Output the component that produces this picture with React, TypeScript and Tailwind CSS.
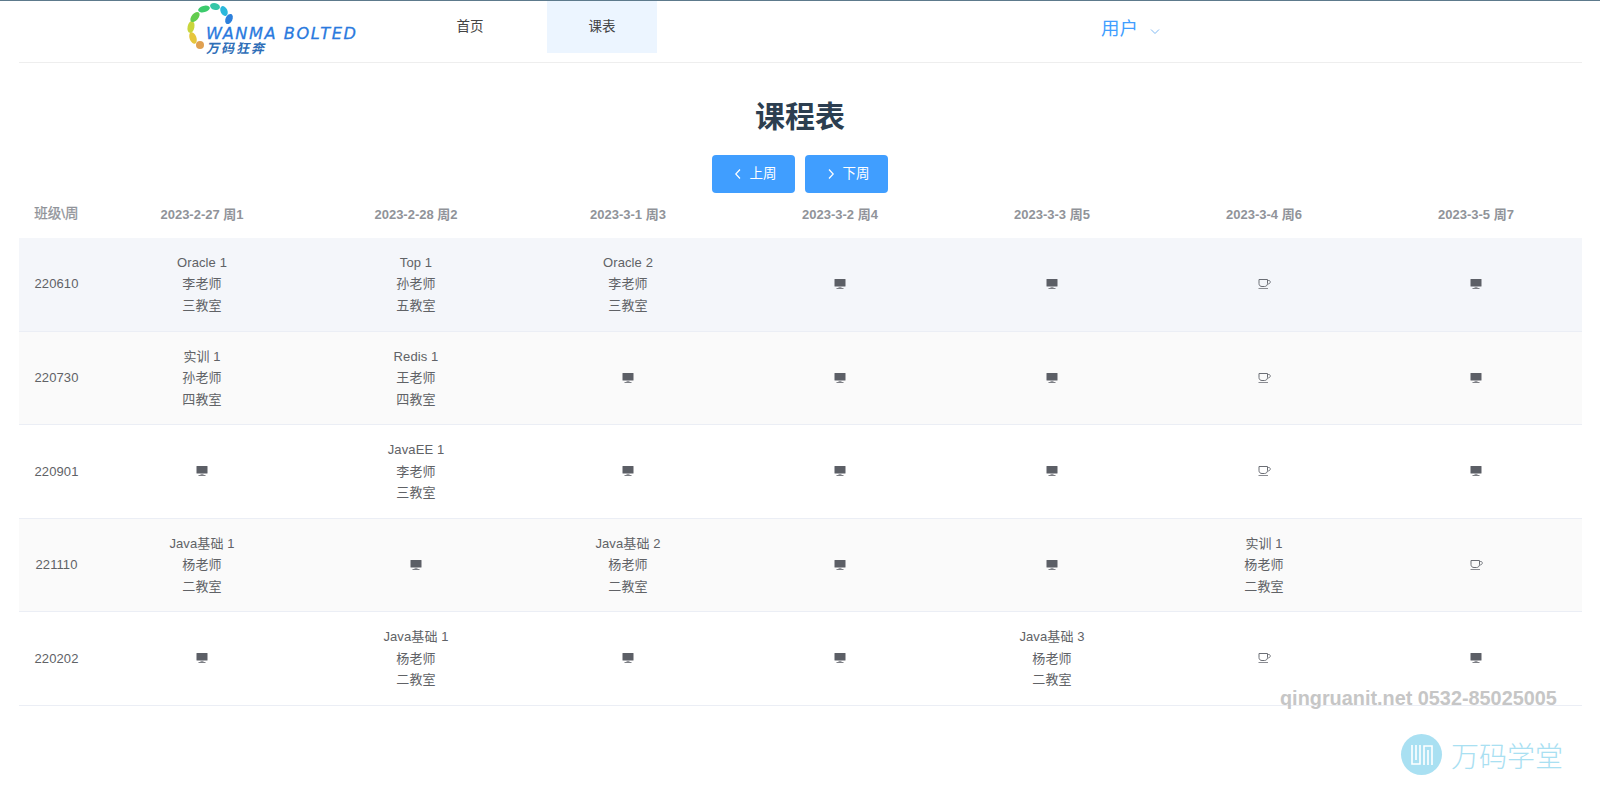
const FONT = "font-['Liberation_Sans','Noto_Sans_CJK_SC',sans-serif]";

type Cell = string[] | "m" | "c";

const days = ["2023-2-27 周1", "2023-2-28 周2", "2023-3-1 周3", "2023-3-2 周4", "2023-3-3 周5", "2023-3-4 周6", "2023-3-5 周7"];

const rows: { id: string; bg: string; cells: Cell[] }[] = [
  {
    id: "220610",
    bg: "bg-[#f4f6fa]",
    cells: [["Oracle 1", "李老师", "三教室"], ["Top 1", "孙老师", "五教室"], ["Oracle 2", "李老师", "三教室"], "m", "m", "c", "m"],
  },
  {
    id: "220730",
    bg: "bg-[#fafafa]",
    cells: [["实训 1", "孙老师", "四教室"], ["Redis 1", "王老师", "四教室"], "m", "m", "m", "c", "m"],
  },
  {
    id: "220901",
    bg: "bg-white",
    cells: ["m", ["JavaEE 1", "李老师", "三教室"], "m", "m", "m", "c", "m"],
  },
  {
    id: "221110",
    bg: "bg-[#fafafa]",
    cells: [["Java基础 1", "杨老师", "二教室"], "m", ["Java基础 2", "杨老师", "二教室"], "m", "m", ["实训 1", "杨老师", "二教室"], "c"],
  },
  {
    id: "220202",
    bg: "bg-white",
    cells: ["m", ["Java基础 1", "杨老师", "二教室"], "m", "m", ["Java基础 3", "杨老师", "二教室"], "c", "m"],
  },
];

function Monitor() {
  return (
    <svg width="12" height="12" viewBox="0 1 12 12" className="inline-block align-middle">
      <rect x="0.5" y="1" width="11" height="7.5" rx="0.5" fill="#5c5f66" />
      <rect x="4.5" y="8.5" width="3" height="1.5" fill="#9a9ca1" />
      <rect x="2.5" y="10" width="7" height="1" fill="#7d7f85" />
    </svg>
  );
}

function Cup() {
  return (
    <svg width="13" height="12" viewBox="0 1 13 12" fill="none" className="inline-block align-middle">
      <path d="M1 1.5H9.5V5.5C9.5 7.5 8 8.5 6.5 8.5H4C2.3 8.5 1 7.5 1 5.5V1.5Z" stroke="#6b6e75" strokeWidth="1" />
      <path d="M9.5 2.5H10.8C12 2.5 12.4 3.4 12.3 4.2C12.1 5.4 11 6 9.5 6" stroke="#6b6e75" strokeWidth="0.9" />
      <path d="M0.5 10.5H10" stroke="#8a8c92" strokeWidth="1" />
    </svg>
  );
}

function Logo() {
  const dots: [number, number, number, number, number, string][] = [
    [7, 36, 3.4, 6, -20, "#e6c63c"],
    [5, 25, 3.4, 6, 12, "#c9d63c"],
    [9, 15, 3.4, 6, 40, "#63cc4e"],
    [18, 7, 6, 3.2, -15, "#3ccb6c"],
    [29, 4.5, 5, 3.4, 15, "#34c6a8"],
    [38, 9, 3.4, 5.2, -25, "#2ab8dc"],
    [43, 17, 3.4, 5.4, 25, "#2d80dc"],
  ];
  return (
    <div className="relative w-[180px] h-[52px]">
      <svg width="50" height="52" viewBox="0 0 50 52" className="absolute left-0 top-0">
        {dots.map(([x, y, rx, ry, rot, c], i) => (
          <ellipse key={i} cx={x} cy={y} rx={rx} ry={ry} fill={c} transform={`rotate(${rot} ${x} ${y})`} />
        ))}
        <circle cx="14" cy="43" r="4" fill="#e0a050" />
      </svg>
      <div className="absolute left-[20px] top-[24px] italic text-[#2a7ade] text-[16.2px] leading-[15px] tracking-[1.55px] whitespace-nowrap font-['DejaVu_Sans',sans-serif] [-webkit-text-stroke:0.3px_#2a7ade]">
        WANMA BOLTED
      </div>
      <div className="absolute left-[20px] top-[40px] italic font-bold text-[#2f6fb8] text-[13px] leading-[11px] tracking-[2px] whitespace-nowrap font-['Noto_Sans_CJK_SC',sans-serif]">
        万码狂奔
      </div>
    </div>
  );
}

function ChevronLeft() {
  return (
    <svg width="8" height="12" viewBox="0 0 8 12" fill="none">
      <path d="M6 1.5L1.8 6L6 10.5" stroke="white" strokeWidth="1.2" />
    </svg>
  );
}

function ChevronRight() {
  return (
    <svg width="8" height="12" viewBox="0 0 8 12" fill="none">
      <path d="M2 1.5L6.2 6L2 10.5" stroke="white" strokeWidth="1.2" />
    </svg>
  );
}

export default function App() {
  return (
    <div className={`relative w-[1600px] h-[795px] overflow-hidden bg-white ${FONT}`}>
      <div className="h-px bg-[#5d7a8c]" />
      <div className="mx-[19px] w-[1563px] h-[62px] border-b border-[#eeeeee] flex items-start">
        <div className="ml-[167px] mt-px">
          <Logo />
        </div>
        <div className="ml-[49px] w-[110px] h-[52px] flex items-center justify-center text-[13.5px] text-[#444444]">首页</div>
        <div className="ml-[22px] w-[110px] h-[52px] flex items-center justify-center text-[13.5px] text-[#444444] bg-[#ecf5ff]">课表</div>
        <div className="ml-[444px] mt-[16px] flex items-center gap-[12px] text-[#409eff] text-[18.5px] leading-6">
          <span>用户</span>
          <svg width="10" height="7" viewBox="0 0 10 7" fill="none" className="mt-[4px]">
            <path d="M1 1.5L5 5.5L9 1.5" stroke="#7fb9f3" strokeWidth="1" />
          </svg>
        </div>
      </div>

      <h1 className="mt-[34px] h-[40px] text-center text-[30px] leading-10 font-bold text-[#2c3e50]">课程表</h1>

      <div className="mt-[18px] ml-[712px] flex gap-[10px]">
        <button className="w-[83px] h-[38px] pl-[3px] rounded bg-[#409eff] text-white text-[13.5px] flex items-center justify-center gap-[8px]">
          <ChevronLeft />
          <span>上周</span>
        </button>
        <button className="w-[83px] h-[38px] pl-[3px] rounded bg-[#409eff] text-white text-[13.5px] flex items-center justify-center gap-[8px]">
          <ChevronRight />
          <span>下周</span>
        </button>
      </div>

      <table className="ml-[19px] w-[1563px] table-fixed border-collapse text-center">
        <colgroup>
          <col className="w-[75px]" />
          <col className="w-[216px]" />
          <col className="w-[212px]" />
          <col className="w-[212px]" />
          <col className="w-[212px]" />
          <col className="w-[212px]" />
          <col className="w-[212px]" />
          <col className="w-[212px]" />
        </colgroup>
        <thead>
          <tr className="h-[44.5px]">
            <th className="pb-[2px] text-[13.5px] font-normal text-[#909399] [-webkit-text-stroke:0.3px_#909399]">班级\周</th>
            {days.map((d) => (
              <th key={d} className="pb-[2px] text-[13px] font-bold text-[#909399]">{d}</th>
            ))}
          </tr>
        </thead>
        <tbody className="text-[13px] leading-[21.5px] tracking-[0.1px] text-[#606266]">
          {rows.map((r) => (
            <tr key={r.id} className={`h-[93.6px] border-b border-[#ebeef5] ${r.bg}`}>
              <td>{r.id}</td>
              {r.cells.map((c, i) => (
                <td key={i}>
                  {c === "m" ? <Monitor /> : c === "c" ? <Cup /> : c.map((l) => <div key={l}>{l}</div>)}
                </td>
              ))}
            </tr>
          ))}
        </tbody>
      </table>

      <div className="absolute left-[1280px] top-[686px] text-[19.85px] leading-6 font-bold text-[#c6c6c6] whitespace-nowrap">
        qingruanit.net 0532-85025005
      </div>
      <div className="absolute left-[1401px] top-[734px] flex items-center gap-[9px]">
        <div className="w-[41px] h-[41px] rounded-full bg-[#a9e0f2] flex items-center justify-center">
          <svg width="24" height="22" viewBox="0 0 24 22" fill="none" stroke="white" strokeWidth="1.6">
            <path d="M2 1V20H10V1" />
            <path d="M6 1V16" />
            <path d="M14 21V2H22V21" />
            <path d="M18 21V6" />
          </svg>
        </div>
        <div className="text-[28px] leading-10 font-light text-[#a9e0f2] font-['Noto_Sans_CJK_SC',sans-serif] whitespace-nowrap">万码学堂</div>
      </div>
    </div>
  );
}
